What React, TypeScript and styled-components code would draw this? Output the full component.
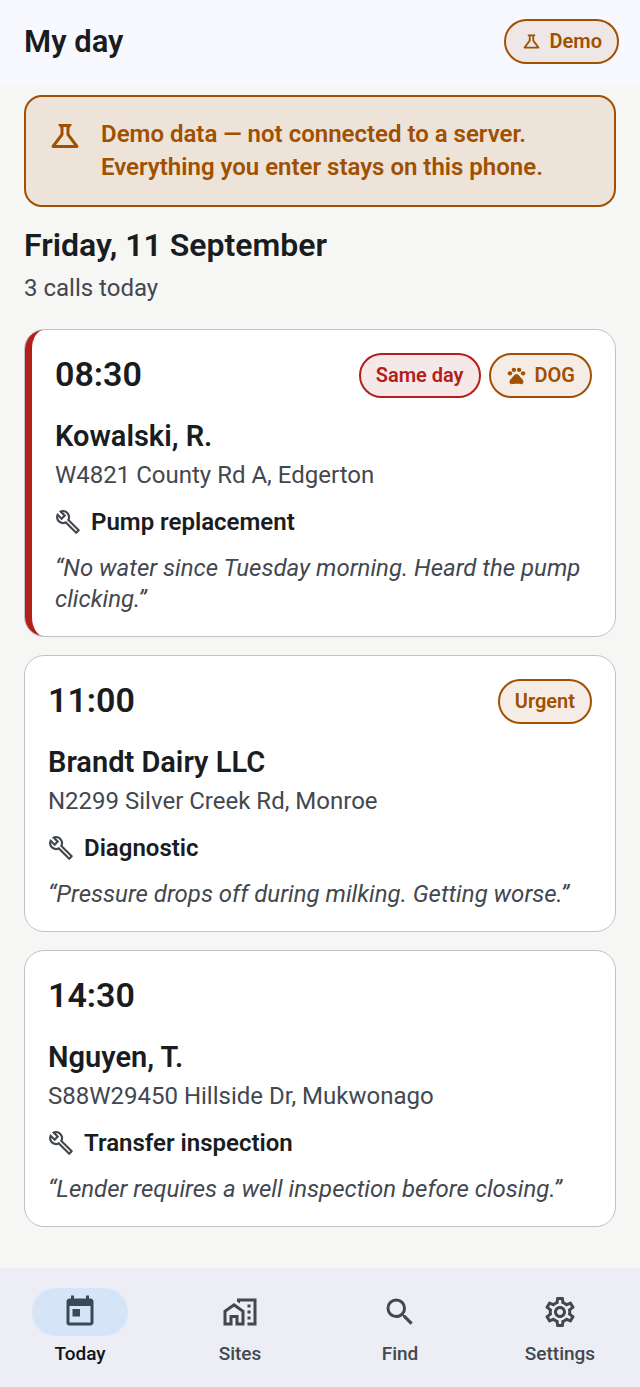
import React from 'react';
import styled, { createGlobalStyle, css } from 'styled-components';
import {
  MdOutlineScience,
  MdOutlineBuild,
  MdPets,
  MdToday,
  MdOutlineHomeWork,
  MdSearch,
  MdOutlineSettings,
} from 'react-icons/md';

const GlobalStyle = createGlobalStyle`
  *, *::before, *::after { box-sizing: border-box; }
  body {
    margin: 0;
    background: #f6f6f4;
    color: #191c20;
    font-family: Roboto, "Liberation Sans", sans-serif;
  }
  h1, h2, h3, p, ul { margin: 0; padding: 0; }
`;

type Tone = 'warning' | 'danger';
const tones = {
  warning: { ink: '#a05000', fill: 'rgba(160, 80, 0, 0.1)' },
  danger: { ink: '#b3201c', fill: 'rgba(179, 32, 28, 0.1)' },
};

const Screen = styled.div`
  min-height: 100vh;
  display: flex;
  flex-direction: column;
`;

const TopBar = styled.header`
  display: flex;
  align-items: center;
  justify-content: space-between;
  height: 84px;
  padding: 0 21px 1px 24px;
  background: #f8f9ff;
`;

const Title = styled.h1`
  font-size: 31px;
  line-height: 40px;
  font-weight: 600;
`;

const Pill = styled.span<{ $tone: Tone }>`
  display: inline-flex;
  align-items: center;
  gap: 8px;
  height: 45px;
  padding: 0 15px 1px;
  border: 2px solid ${(p) => tones[p.$tone].ink};
  border-radius: 23px;
  background: ${(p) => tones[p.$tone].fill};
  color: ${(p) => tones[p.$tone].ink};
  font-size: 20px;
  line-height: 28px;
  font-weight: 600;
  white-space: nowrap;
`;

const Content = styled.main`
  flex: 1;
  padding: 11px 24px 40px;
`;

const Banner = styled.section`
  display: flex;
  align-items: flex-start;
  gap: 18px;
  padding: 21px;
  border: 2px solid #a05000;
  border-radius: 18px;
  background: #ede3d9;
  color: #a05000;
  font-size: 24px;
  line-height: 33px;
  font-weight: 600;

  svg { flex: none; }
`;

const DayTitle = styled.h2`
  margin-top: 18px;
  font-size: 32px;
  line-height: 40px;
  font-weight: 600;
`;

const DayCount = styled.p`
  margin-top: 7px;
  color: #43474e;
  font-size: 24px;
  line-height: 32px;
`;

const CallList = styled.ul`
  display: grid;
  gap: 18px;
  margin-top: 25px;
  list-style: none;
`;

const Card = styled.li`
  border: 1px solid #bfc2c8;
  border-radius: 20px;
  background: #fff;
`;

const CardBody = styled.article<{ $flagged: boolean }>`
  padding: 23px 23px 21px;
  border-radius: 19px;
  ${(p) => p.$flagged && css`border-left: 7px solid #b3201c;`}
`;

const CardHead = styled.div`
  display: flex;
  align-items: flex-start;
  justify-content: space-between;
  min-height: 45px;
`;

const Time = styled.time`
  font-size: 34px;
  line-height: 42px;
  font-weight: 600;
`;

const Pills = styled.div`
  display: flex;
  gap: 8px;
`;

const Customer = styled.h3`
  margin-top: 18px;
  font-size: 29px;
  line-height: 40px;
  font-weight: 600;
`;

const Address = styled.p`
  margin-top: 3px;
  color: #43474e;
  font-size: 24px;
  line-height: 32px;
`;

const Service = styled.p`
  display: flex;
  align-items: center;
  gap: 10px;
  margin-top: 15px;
  font-size: 24px;
  line-height: 32px;
  font-weight: 600;

  svg { color: #43474e; }
`;

const Quote = styled.p`
  margin-top: 15px;
  color: #43474e;
  font-size: 24px;
  line-height: 31px;
  font-style: italic;
`;

const BottomNav = styled.nav`
  display: grid;
  grid-template-columns: repeat(4, 1fr);
  height: 119px;
  padding-top: 20px;
  background: #ecedf5;
`;

const NavLink = styled.a<{ $active: boolean }>`
  display: flex;
  flex-direction: column;
  align-items: center;
  gap: 6px;
  color: ${(p) => (p.$active ? '#111418' : '#43474e')};
  font-size: 19px;
  line-height: 24px;
  font-weight: 500;
  text-decoration: none;
`;

const NavIcon = styled.span<{ $active: boolean }>`
  display: grid;
  place-items: center;
  width: 96px;
  height: 48px;
  border-radius: 24px;
  background: ${(p) => (p.$active ? '#d5e4f7' : 'transparent')};
  color: ${(p) => (p.$active ? '#3a4858' : '#43474e')};
`;

interface Call {
  time: string;
  customer: string;
  address: string;
  service: string;
  note: string;
  priority?: { label: string; tone: Tone };
  dog?: boolean;
}

const calls: Call[] = [
  {
    time: '08:30',
    customer: 'Kowalski, R.',
    address: 'W4821 County Rd A, Edgerton',
    service: 'Pump replacement',
    note: 'No water since Tuesday morning. Heard the pump clicking.',
    priority: { label: 'Same day', tone: 'danger' },
    dog: true,
  },
  {
    time: '11:00',
    customer: 'Brandt Dairy LLC',
    address: 'N2299 Silver Creek Rd, Monroe',
    service: 'Diagnostic',
    note: 'Pressure drops off during milking. Getting worse.',
    priority: { label: 'Urgent', tone: 'warning' },
  },
  {
    time: '14:30',
    customer: 'Nguyen, T.',
    address: 'S88W29450 Hillside Dr, Mukwonago',
    service: 'Transfer inspection',
    note: 'Lender requires a well inspection before closing.',
  },
];

const tabs = [
  { label: 'Today', Icon: MdToday },
  { label: 'Sites', Icon: MdOutlineHomeWork },
  { label: 'Find', Icon: MdSearch },
  { label: 'Settings', Icon: MdOutlineSettings },
];

export default function App() {
  return (
    <>
      <GlobalStyle />
      <Screen>
        <TopBar>
          <Title>My day</Title>
          <Pill $tone="warning">
            <MdOutlineScience size={21} />
            Demo
          </Pill>
        </TopBar>
        <Content>
          <Banner>
            <MdOutlineScience size={36} />
            <p>Demo data — not connected to a server. Everything you enter stays on this phone.</p>
          </Banner>
          <DayTitle>Friday, 11 September</DayTitle>
          <DayCount>3 calls today</DayCount>
          <CallList>
            {calls.map((call) => (
              <Card key={call.time}>
                <CardBody $flagged={call.priority?.tone === 'danger'}>
                  <CardHead>
                    <Time>{call.time}</Time>
                    <Pills>
                      {call.priority && <Pill $tone={call.priority.tone}>{call.priority.label}</Pill>}
                      {call.dog && (
                        <Pill $tone="warning">
                          <MdPets size={21} />
                          DOG
                        </Pill>
                      )}
                    </Pills>
                  </CardHead>
                  <Customer>{call.customer}</Customer>
                  <Address>{call.address}</Address>
                  <Service>
                    <MdOutlineBuild size={26} />
                    {call.service}
                  </Service>
                  <Quote>{`“${call.note}”`}</Quote>
                </CardBody>
              </Card>
            ))}
          </CallList>
        </Content>
        <BottomNav>
          {tabs.map(({ label, Icon }, i) => (
            <NavLink key={label} href={`#${label.toLowerCase()}`} $active={i === 0} aria-current={i === 0 ? 'page' : undefined}>
              <NavIcon $active={i === 0}>
                <Icon size={36} />
              </NavIcon>
              {label}
            </NavLink>
          ))}
        </BottomNav>
      </Screen>
    </>
  );
}
